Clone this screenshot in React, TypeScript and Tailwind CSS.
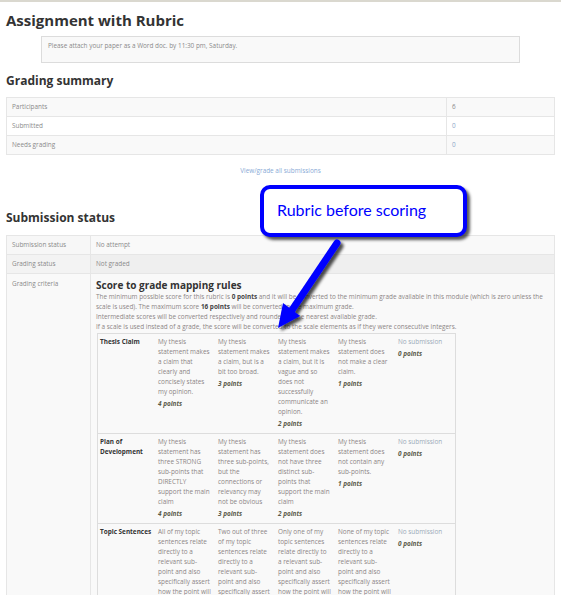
import React from "react";

type Level = { lines: string[]; pts: string };
type Crit = { name: string[]; levels: Level[] };

const rubric: Crit[] = [
  {
    name: ["Thesis Claim"],
    levels: [
      { lines: ["My thesis", "statement makes", "a claim that", "clearly and", "concisely states", "my opinion."], pts: "4 points" },
      { lines: ["My thesis", "statement makes", "a claim, but is a", "bit too broad."], pts: "3 points" },
      { lines: ["My thesis", "statement makes", "a claim, but it is", "vague and so", "does not", "successfully", "communicate an", "opinion."], pts: "2 points" },
      { lines: ["My thesis", "statement does", "not make a clear", "claim."], pts: "1 points" },
      { lines: ["No submission"], pts: "0 points" },
    ],
  },
  {
    name: ["Plan of", "Development"],
    levels: [
      { lines: ["My thesis", "statement has", "three STRONG", "sub-points that", "DIRECTLY", "support the main", "claim"], pts: "4 points" },
      { lines: ["My thesis", "statement has", "three sub-points,", "but the", "connections or", "relevancy may", "not be obvious"], pts: "3 points" },
      { lines: ["My thesis", "statement does", "not have three", "distinct sub-", "points that", "support the main", "claim"], pts: "2 points" },
      { lines: ["My thesis", "statement does", "not contain any", "sub-points."], pts: "1 points" },
      { lines: ["No submission"], pts: "0 points" },
    ],
  },
  {
    name: ["Topic Sentences"],
    levels: [
      { lines: ["All of my topic", "sentences relate", "directly to a", "relevant sub-", "point and also", "specifically assert", "how the point will"], pts: "4 points" },
      { lines: ["Two out of three", "of my topic", "sentences relate", "directly to a", "relevant sub-", "point and also", "specifically assert"], pts: "3 points" },
      { lines: ["Only one of my", "topic sentences", "relate directly to", "a relevant sub-", "point and also", "specifically assert", "how the point will"], pts: "2 points" },
      { lines: ["None of my topic", "sentences relate", "directly to a", "relevant sub-", "point and also", "specifically assert", "how the point will"], pts: "1 points" },
      { lines: ["No submission"], pts: "0 points" },
    ],
  },
];

function SummaryRow({ label, value, bg, link }: { label: string; value: string; bg: string; link?: boolean }) {
  return (
    <div className={`flex h-[19px] border-b border-[#e6e6e6] ${bg}`}>
      <div className="w-[440px] flex items-center pl-[5px] border-r border-[#e6e6e6]">{label}</div>
      <div className={`flex-1 flex items-center pl-[5px] ${link ? "text-[#8aa6c8]" : ""}`}>{value}</div>
    </div>
  );
}

export default function App() {
  return (
    <div className="relative w-[561px] h-[595px] overflow-hidden bg-white font-['Open_Sans',sans-serif] text-[#333]">
      <div className="h-[2px] bg-[#dad8cf]" />
      <div className="px-[6px]">
        <h1 className="mt-[8px] h-[20px] leading-[20px] text-[15px] font-bold text-[#333]">Assignment with Rubric</h1>
        <div className="mt-[6px] ml-[35px] w-[479px] h-[27px] border border-[#dcdcdc] bg-[#f9f9f9] pl-[6px] pt-[4px] text-[6.4px] leading-[10px] text-[#8a8a8a]">
          Please attach your paper as a Word doc. by 11:30 pm, Saturday.
        </div>
        <h2 className="mt-[10px] h-[16px] leading-[16px] text-[12px] font-bold text-[#333]">Grading summary</h2>
        <div className="mt-[8px] border-t border-x border-[#e6e6e6] text-[6.4px] text-[#8a8a8a]">
          <SummaryRow label="Participants" value="6" bg="bg-[#f9f9f9]" />
          <SummaryRow label="Submitted" value="0" bg="bg-white" link />
          <SummaryRow label="Needs grading" value="0" bg="bg-[#f9f9f9]" link />
        </div>
        <div className="mt-[10px] h-[12px] leading-[12px] text-center text-[6.4px] text-[#88aad6]">View/grade all submissions</div>
        <h2 className="mt-[33px] h-[16px] leading-[16px] text-[12px] font-bold text-[#333]">Submission status</h2>
        <div className="mt-[9px] border-t border-x border-[#e6e6e6] text-[6.4px] text-[#8a8a8a]">
          <div className="flex h-[19px] border-b border-[#e6e6e6] bg-[#f7f7f7]">
            <div className="w-[84px] flex items-center pl-[5px] border-r border-[#e6e6e6]">Submission status</div>
            <div className="flex-1 flex items-center pl-[5px] bg-[#f9f9f9]">No attempt</div>
          </div>
          <div className="flex h-[19px] border-b border-[#e6e6e6] bg-[#f3f3f3]">
            <div className="w-[84px] flex items-center pl-[5px] border-r border-[#e6e6e6]">Grading status</div>
            <div className="flex-1 flex items-center pl-[5px] bg-[#efefef]">Not graded</div>
          </div>
          <div className="flex h-[400px] bg-[#f9f9f9]">
            <div className="w-[84px] pl-[5px] pt-[5px] leading-[10px] border-r border-[#e6e6e6]">Grading criteria</div>
            <div className="flex-1 pl-[5px] pt-[4px]">
              <h3 className="h-[14px] leading-[14px] text-[10px] font-bold text-[#333]">Score to grade mapping rules</h3>
              <div className="leading-[10px] text-[#8c8585]">
                <p>
                  The minimum possible score for this rubric is <b className="text-[#444]">0 points</b> and it will be converted to the minimum grade available in this module (which is zero unless the
                  <br />
                  scale is used). The maximum score <b className="text-[#444]">16 points</b> will be converted to the maximum grade.
                </p>
                <p>Intermediate scores will be converted respectively and rounded to the nearest available grade.</p>
                <p>If a scale is used instead of a grade, the score will be converted to the scale elements as if they were consecutive integers.</p>
              </div>
              <div className="mt-[1px] ml-[1px] w-[359px] border-t border-x border-[#dddddd] leading-[10px]">
                {rubric.map((c, ci) => (
                  <div key={ci} className="grid grid-cols-[57px_repeat(5,60px)] border-b border-[#dddddd] pt-[3px] pb-[4px]">
                    <div className="pl-[2px] font-bold text-[#333]">
                      {c.name.map((n, i) => (
                        <div key={i} className="whitespace-nowrap">{n}</div>
                      ))}
                    </div>
                    {c.levels.map((l, li) => (
                      <div key={li} className={`pl-[3px] ${li === 4 ? "text-[#9aaab8]" : "text-[#8c8585]"}`}>
                        {l.lines.map((t, ti) => (
                          <div key={ti} className="whitespace-nowrap">{t}</div>
                        ))}
                        <div className="mt-[2px] font-bold italic text-[#5a5a48]">{l.pts}</div>
                      </div>
                    ))}
                  </div>
                ))}
              </div>
            </div>
          </div>
        </div>
      </div>

      {/* Callout */}
      <div className="absolute left-[260px] top-[185px] w-[207px] h-[52px] rounded-[10px] border-[4px] border-[#0000ff] bg-white shadow-[3px_3px_3px_rgba(0,0,0,0.65)] flex items-center pl-[13px] pb-[3px]">
        <span className="font-['Lato',sans-serif] text-[16px] leading-[20px] text-[#0000ff]">Rubric before scoring</span>
      </div>

      {/* Arrow */}
      <svg className="absolute left-0 top-0 pointer-events-none" width="561" height="595" viewBox="0 0 561 595">
        <defs>
          <filter id="sh" x="-50%" y="-50%" width="200%" height="200%">
            <feDropShadow dx="3" dy="3" stdDeviation="1.5" floodColor="#000" floodOpacity="0.7" />
          </filter>
        </defs>
        <g filter="url(#sh)">
          <line x1="337" y1="243" x2="292" y2="310" stroke="#0000ff" strokeWidth="7" strokeLinecap="round" />
          <polygon points="278,328 300,316 283,303" fill="#0000ff" />
        </g>
      </svg>
    </div>
  );
}
